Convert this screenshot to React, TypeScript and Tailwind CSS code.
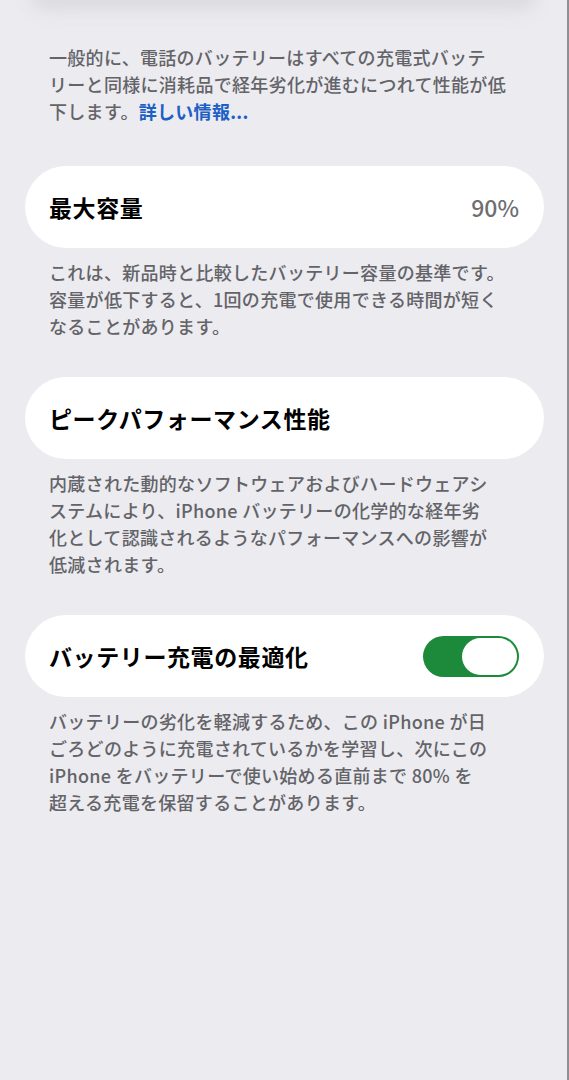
import React, { useState } from 'react';

const jp = { fontFamily: '"Noto Sans CJK JP", "Noto Sans", sans-serif' };

interface Section {
  id: string;
  title: string;
  value?: string;
  toggle?: boolean;
  footer: string[];
}

const sections: Section[] = [
  {
    id: 'capacity',
    title: '最大容量',
    value: '90%',
    footer: [
      'これは、新品時と比較したバッテリー容量の基準です。',
      '容量が低下すると、1回の充電で使用できる時間が短く',
      'なることがあります。',
    ],
  },
  {
    id: 'peak',
    title: 'ピークパフォーマンス性能',
    footer: [
      '内蔵された動的なソフトウェアおよびハードウェアシ',
      'ステムにより、iPhone バッテリーの化学的な経年劣',
      '化として認識されるようなパフォーマンスへの影響が',
      '低減されます。',
    ],
  },
  {
    id: 'optimize',
    title: 'バッテリー充電の最適化',
    toggle: true,
    footer: [
      'バッテリーの劣化を軽減するため、この iPhone が日',
      'ごろどのように充電されているかを学習し、次にこの',
      'iPhone をバッテリーで使い始める直前まで 80% を',
      '超える充電を保留することがあります。',
    ],
  },
];

const Toggle: React.FC<{ on: boolean; onChange: () => void }> = ({ on, onChange }) => (
  <button
    type="button"
    onClick={onChange}
    className={`flex h-[41px] w-[96px] items-center rounded-full p-[2px] ${
      on ? 'justify-end bg-[#1d8a3b]' : 'justify-start bg-[#d6d6db]'
    }`}
  >
    <span className="h-[37px] w-[55px] rounded-full bg-white" />
  </button>
);

const Footer: React.FC<{ lines: string[] }> = ({ lines }) => (
  <div className="mt-[11px] pl-[49px] text-[18px] font-medium leading-[27px] tracking-[0.3px] text-[#636368]">
    {lines.map((line) => (
      <div key={line} className="whitespace-nowrap">
        {line}
      </div>
    ))}
  </div>
);

export default function App() {
  const [optimized, setOptimized] = useState(true);

  return (
    <div
      style={jp}
      className="min-h-[1080px] w-[569px] overflow-hidden border-r-2 border-[#8e8e93] bg-[#ebebf0]"
    >
      {/* soft shadow left by the card scrolled off above */}
      <div className="h-[44px] px-[30px]">
        <div className="h-[22px] -translate-y-[8px] rounded-b-[40px] bg-gradient-to-b from-[#d0cfd5] to-[#e8e7ec] blur-[8px]" />
      </div>

      <div className="pl-[49px] text-[18px] font-medium leading-[27px] tracking-[0.3px] text-[#636368]">
        <div className="whitespace-nowrap">一般的に、電話のバッテリーはすべての充電式バッテ</div>
        <div className="whitespace-nowrap">リーと同様に消耗品で経年劣化が進むにつれて性能が低</div>
        <div className="whitespace-nowrap">
          下します。<span className="font-bold text-[#1c5fc6]">詳しい情報...</span>
        </div>
      </div>

      <div className="mt-[41px] flex flex-col gap-[37px]">
        {sections.map((section) => (
          <div key={section.id}>
            <div className="ml-[25px] mr-[23px] flex h-[82px] items-center justify-between rounded-full bg-white pl-[24px] pr-[25px]">
              <span className="text-[23px] font-bold tracking-[0.6px] text-black">{section.title}</span>
              {section.value && (
                <span className="text-[23px] font-medium text-[#6e6e73]">{section.value}</span>
              )}
              {section.toggle && (
                <Toggle on={optimized} onChange={() => setOptimized((v) => !v)} />
              )}
            </div>
            <Footer lines={section.footer} />
          </div>
        ))}
      </div>
    </div>
  );
}
